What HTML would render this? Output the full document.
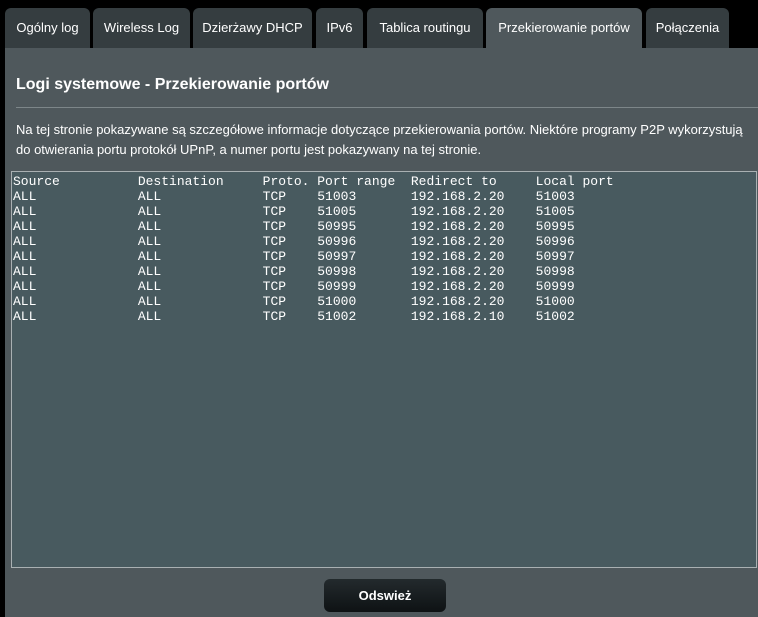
<!DOCTYPE html>
<html><head><meta charset="utf-8"><style>
html,body{margin:0;padding:0;background:#000;width:758px;height:617px;overflow:hidden;font-family:"Liberation Sans",Arial,sans-serif;}
.tab{position:absolute;top:8px;height:40px;background:#353d40;border-radius:6px 6px 0 0;color:#fff;font-size:13px;line-height:40px;text-align:center;box-sizing:border-box;}
.tab.act{background:#4f585c;}
.panel{position:absolute;left:5px;top:48px;width:753px;height:569px;background:#4f585c;}
h1{position:absolute;left:16px;top:76px;margin:0;font-size:16px;font-weight:bold;color:#fff;}
.hr{position:absolute;left:16px;top:107px;width:742px;height:1px;background:#7d8689;}
.p{position:absolute;left:16px;top:120px;width:740px;font-size:13px;line-height:20px;color:#fff;}
.ta{position:absolute;left:11px;top:171px;width:746px;height:397px;box-sizing:border-box;border:1px solid #a9b0b2;background:#485a5f;}
pre{margin:0;position:absolute;left:1px;top:2px;font-family:"Liberation Mono","Courier New",monospace;font-size:13px;line-height:15px;color:#fff;}
.btn{position:absolute;left:324px;top:579px;width:122px;height:33px;border-radius:6px;background:linear-gradient(#232a2d,#0e1214);color:#fff;font-weight:bold;font-size:13px;text-align:center;line-height:33px;}
</style></head><body>
<div class="panel"></div>
<div class="tab" style="left:5px;width:85px">Ogólny log</div>
<div class="tab" style="left:93px;width:97px">Wireless Log</div>
<div class="tab" style="left:193px;width:119px">Dzierżawy DHCP</div>
<div class="tab" style="left:316px;width:47px">IPv6</div>
<div class="tab" style="left:367px;width:116px">Tablica routingu</div>
<div class="tab act" style="left:486px;width:156px">Przekierowanie portów</div>
<div class="tab" style="left:646px;width:83px">Połączenia</div>
<h1>Logi systemowe - Przekierowanie portów</h1>
<div class="hr"></div>
<div class="p">Na tej stronie pokazywane są szczegółowe informacje dotyczące przekierowania portów. Niektóre programy P2P wykorzystują do otwierania portu protokół UPnP, a numer portu jest pokazywany na tej stronie.</div>
<div class="ta"><pre>Source          Destination     Proto. Port range  Redirect to     Local port
ALL             ALL             TCP    51003       192.168.2.20    51003
ALL             ALL             TCP    51005       192.168.2.20    51005
ALL             ALL             TCP    50995       192.168.2.20    50995
ALL             ALL             TCP    50996       192.168.2.20    50996
ALL             ALL             TCP    50997       192.168.2.20    50997
ALL             ALL             TCP    50998       192.168.2.20    50998
ALL             ALL             TCP    50999       192.168.2.20    50999
ALL             ALL             TCP    51000       192.168.2.20    51000
ALL             ALL             TCP    51002       192.168.2.10    51002</pre></div>
<div class="btn">Odswież</div>
</body></html>
